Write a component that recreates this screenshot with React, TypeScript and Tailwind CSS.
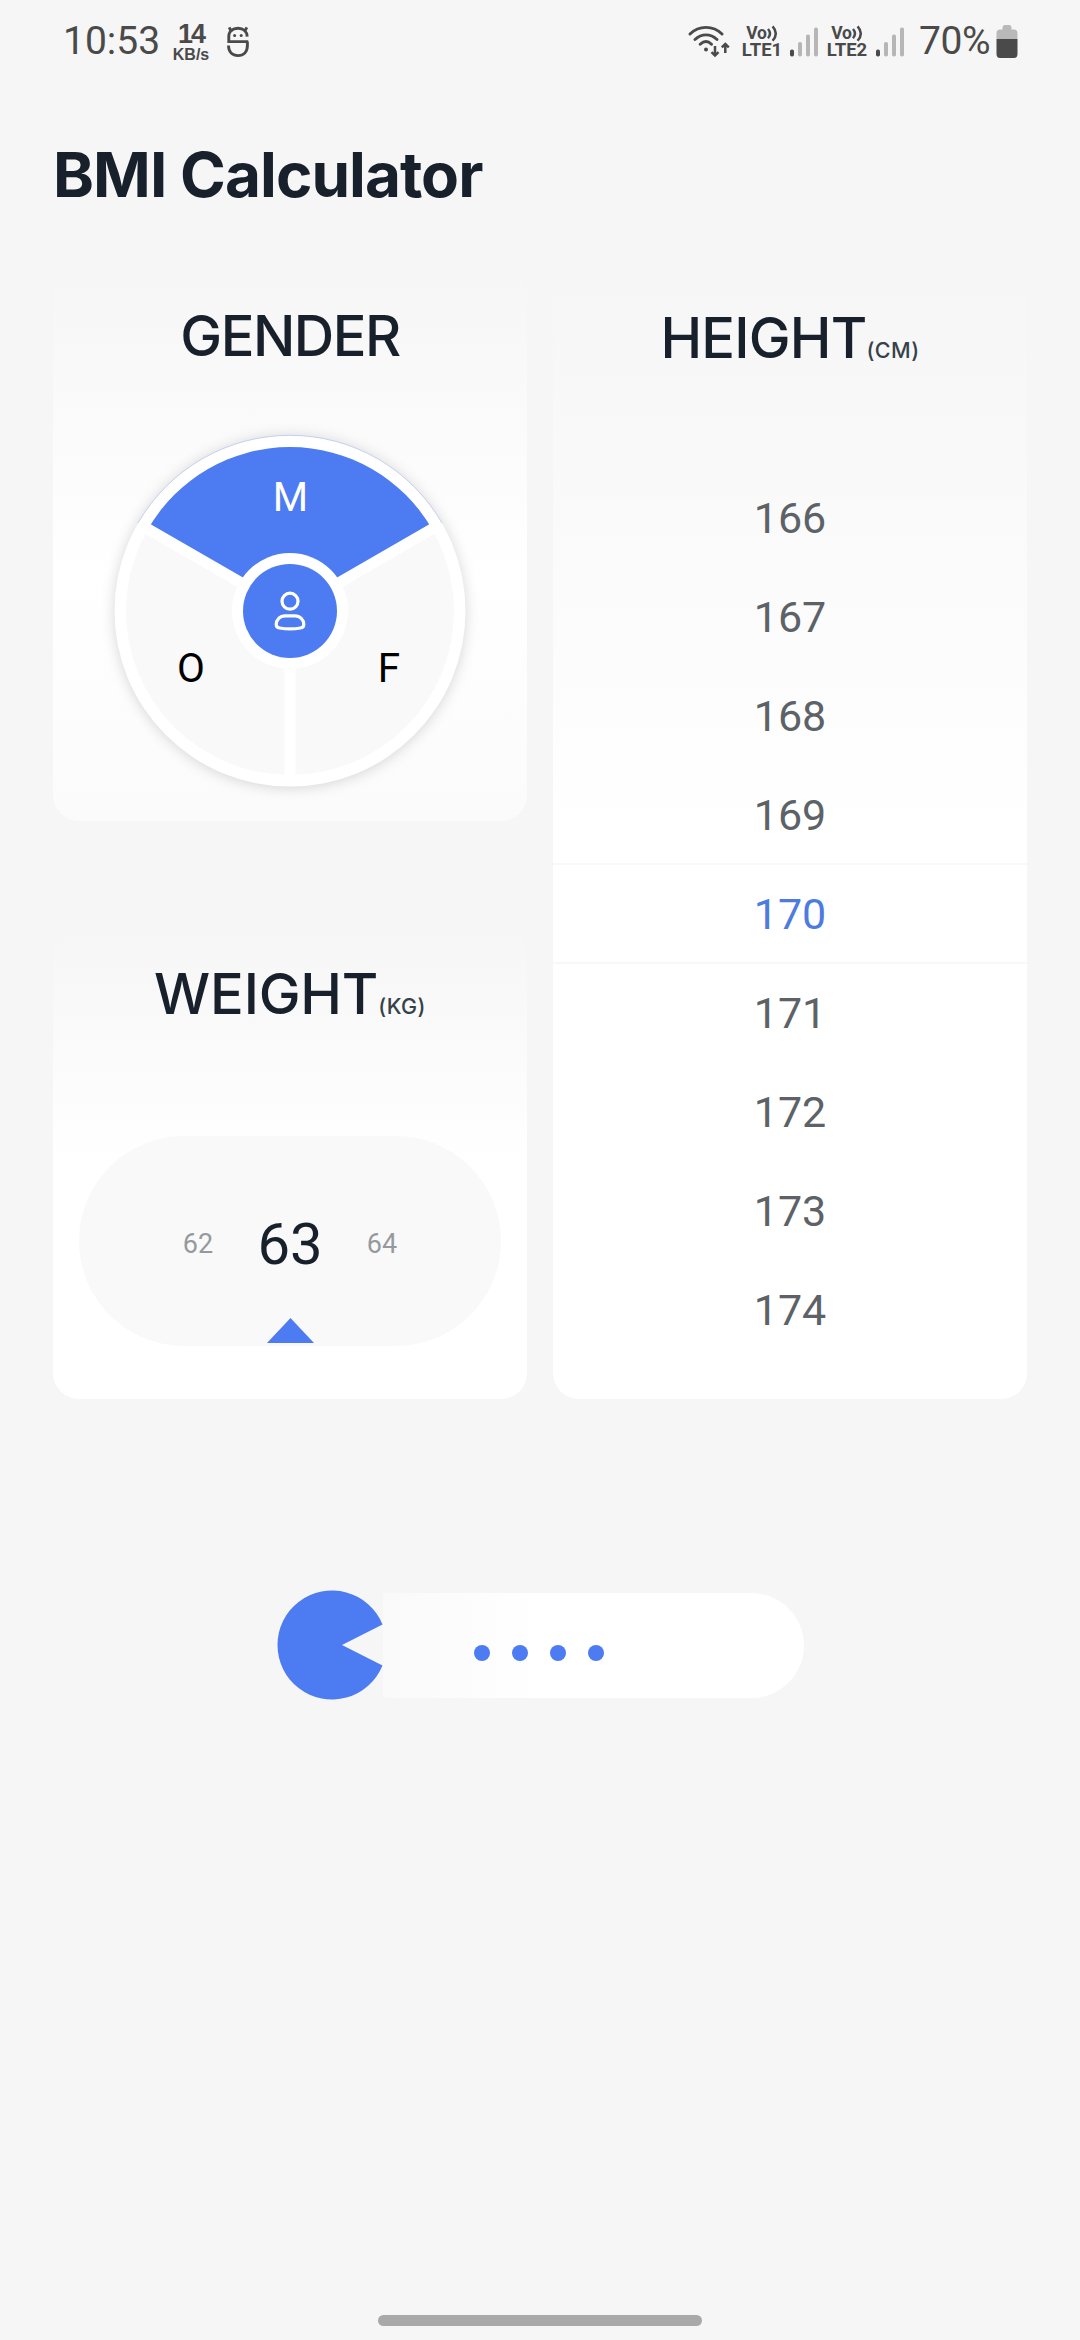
const BLUE = "#4d7bf1";

function Signal() {
  return (
    <svg width="28" height="30" viewBox="0 0 28 30">
      <rect x="0" y="22.5" width="4" height="7" rx="1.8" fill="#4a4a4a" />
      <rect x="8" y="15" width="4" height="14.5" rx="1.8" fill="#b6b6b6" />
      <rect x="16" y="7.5" width="4" height="22" rx="1.8" fill="#b6b6b6" />
      <rect x="24" y="0.5" width="4" height="29" rx="1.8" fill="#b6b6b6" />
    </svg>
  );
}

function Lte({ n }: { n: string }) {
  return (
    <div className="flex w-[40px] flex-col items-center whitespace-nowrap font-bold">
      <span className="flex h-[17px] items-center text-[17.5px] leading-[17px] tracking-[-0.3px]">
        Vo
        <svg className="shrink-0" width="11" height="17" viewBox="0 0 11 17" fill="none" stroke="#4a4a4a" strokeWidth="2.5">
          <path d="M1 4 Q5 8.5 1 13.2 M5.6 1.4 Q12 8.4 5.6 15.8" />
        </svg>
      </span>
      <span className="h-[17px] text-[18.5px] leading-[17px]">LTE{n}</span>
    </div>
  );
}

function StatusBar() {
  return (
    <header className="flex h-[80px] items-start pt-[23px] text-[#4a4a4a]">
      <div className="ml-[63px] w-[98px] text-[39px] leading-[36px]">10:53</div>
      <div className="ml-[10px] flex w-[40px] flex-col items-center font-['Liberation_Sans',sans-serif] font-bold">
        <span className="h-[22px] text-[27px] leading-[22px] tracking-[-2px]">14</span>
        <span className="mt-[2px] text-[16px] leading-[16px]">KB/s</span>
      </div>
      <svg className="ml-[15px] mt-[2px]" width="24" height="34" viewBox="0 0 24 34" fill="none" stroke="#4a4a4a" strokeWidth="2.9">
        <path d="M22.2 16.6H2.8V11.6C2.8 6.4 6.5 3.2 12 3.2S21 6.4 21.2 11.6M2.5 20.6C2.5 27 6.5 30.6 12 30.6S21.4 27 21.4 20.4V16.6M5.6 7.2 3.2 2.4M18.4 7.2 20.8 2.4" />
        <circle cx="8.6" cy="10.6" r="1.5" fill="#4a4a4a" stroke="none" />
        <circle cx="15.2" cy="10.6" r="1.5" fill="#4a4a4a" stroke="none" />
      </svg>
      <div className="ml-auto flex items-start">
        <svg className="mt-[2px]" width="43" height="34" viewBox="0 0 43 34" fill="none" stroke="#4a4a4a" strokeWidth="2.9" strokeLinecap="round" strokeLinejoin="round">
          <path d="M2 9C11 0.2 25 0.2 34 9M7 14.5C13.5 8.3 22.5 8.3 29 14.5M12.2 19.3C16 15.7 20 15.7 23.5 19.2" />
          <circle cx="18" cy="24.5" r="2" fill="#4a4a4a" stroke="none" />
          <path d="M27 21V30M23.5 27.2 27 30.6 30.5 27.2M37.3 28V19.5M33.8 22.4 37.3 19 40.8 22.4" strokeWidth="2.5" strokeLinecap="butt" strokeLinejoin="miter" />
        </svg>
        <div className="ml-[11px] mt-[2px]"><Lte n="1" /></div>
        <div className="ml-[8px] mt-[3.5px]"><Signal /></div>
        <div className="ml-[9px] mt-[2px]"><Lte n="2" /></div>
        <div className="ml-[9px] mt-[3.5px]"><Signal /></div>
        <div className="ml-[15px] w-[73px] text-[39px] leading-[36px] tracking-[-0.4px]">70%</div>
        <svg className="ml-[4px] mr-[62px] mt-[2px]" width="22" height="33" viewBox="0 0 22 33">
          <path d="M6.5 3Q6.5 0 9 0H13Q15.5 0 15.5 3V4.5H18Q21.5 4.5 21.5 8V14H.5V8Q.5 4.5 4 4.5H6.5Z" fill="#b9b9b9" />
          <path d="M.5 14H21.5V29Q21.5 33 18 33H4Q.5 33 .5 29Z" fill="#4a4a4a" />
        </svg>
      </div>
    </header>
  );
}

function GenderWheel() {
  return (
    <svg className="mx-auto block overflow-visible" width="352" height="352" viewBox="-176 -176 352 352">
      <circle r="175.5" fill="#fff" className="drop-shadow-[0_1px_7px_rgba(0,0,0,0.16)]" />
      <path d="M-152 -88A175.6 175.6 0 0 1 152 -88" fill="none" stroke="#b9c8f5" strokeWidth="0.8" />
      <circle r="164" fill="#f9f9f9" />
      <path d="M0 0L-142 -82A164 164 0 0 1 142 -82Z" fill={BLUE} />
      <path d="M0 0L-146 -84.3M0 0L146 -84.3M0 0V168" stroke="#fff" strokeWidth="11" />
      <circle r="58" fill="#fff" />
      <circle r="47" fill={BLUE} />
      <g fill="none" stroke="#fff" strokeWidth="3.2" strokeLinejoin="round">
        <circle cx="0" cy="-9.8" r="8" />
        <path d="M-5 4.8H5C10 4.8 13.8 9 13.8 13.4C13.8 15.6 12.6 16.6 10.5 17C4 18.1 -4 18.1 -10.5 17C-12.6 16.6 -13.8 15.6 -13.8 13.4C-13.8 9 -10 4.8 -5 4.8Z" />
      </g>
      <g fontSize="40.5" textAnchor="middle">
        <text x="0.5" y="-100" fill="#fff">M</text>
        <text x="-99" y="71" fill="#000">O</text>
        <text x="99" y="71" fill="#000">F</text>
      </g>
    </svg>
  );
}

function Heading({ title, unit, tracking }: { title: string; unit?: string; tracking: string }) {
  return (
    <h2 className="flex h-[64px] items-baseline justify-center whitespace-nowrap font-['Inter',sans-serif] text-[56px] font-medium leading-[64px] text-[#17202b]">
      <span className={tracking}>{title}</span>
      {unit && <span className="text-[21.5px] leading-[24px] tracking-[0.4px] text-[#36414a]">({unit})</span>}
    </h2>
  );
}

export default function App() {
  const heights = [166, 167, 168, 169, 170, 171, 172, 173, 174];
  return (
    <div className="flex h-[2340px] w-[1080px] flex-col overflow-hidden bg-[#f6f6f6] font-['Roboto',sans-serif]">
      <StatusBar />
      <h1 className="ml-[53px] mt-[64px] h-[126px] whitespace-nowrap font-['Inter',sans-serif] text-[62px] font-bold leading-[62px] tracking-[-0.95px] text-[#17202b]">
        BMI Calculator
      </h1>
      <main className="flex h-[1129px] gap-[26px] px-[53px]">
        <div className="flex w-[474px] flex-col justify-between">
          <section className="h-[551px] rounded-[26px] bg-[linear-gradient(#f6f6f6,#ffffff_55%,#fbfbfb)] pt-[34px]">
            <Heading title="GENDER" tracking="tracking-[-1.5px]" />
            <div className="mt-[67px]"><GenderWheel /></div>
          </section>
          <section className="h-[472px] rounded-[26px] bg-[linear-gradient(#f6f6f6,#ffffff_50%)] px-[26px] pt-[35px]">
            <Heading title="WEIGHT" unit="KG" tracking="tracking-[-0.2px]" />
            <div className="mt-[110px] flex h-[210px] flex-col items-center rounded-full bg-[#f9f9f9]">
              <div className="mt-[72px] flex h-[72px] items-center text-[27px] text-[#96999e]">
                <span className="w-[60px] text-center">62</span>
                <span className="w-[124px] text-center text-[58px] text-[#17202b]">63</span>
                <span className="w-[60px] text-center">64</span>
              </div>
              <svg className="mt-[38px]" width="48" height="25" viewBox="0 0 48 25">
                <path d="M24.5 0L48 25H1Z" fill={BLUE} />
              </svg>
            </div>
          </section>
        </div>
        <section className="w-[474px] rounded-[26px] bg-[linear-gradient(#f6f6f6,#ffffff_50%)] pt-[36px]">
          <Heading title="HEIGHT" unit="CM" tracking="tracking-[-0.8px]" />
          <ul className="mt-[98px] text-center text-[43px] leading-[101px] text-[#5c6267]">
            {heights.map((h) => (
              <li key={h} className={h === 170 ? "h-[99px] text-[#4d7bde] shadow-[0_-1px_#f8f8f8,inset_0_1px_#f8f8f8,0_1px_#f8f8f8,inset_0_-1px_#f8f8f8]" : "h-[99px]"}>
                {h}
              </li>
            ))}
          </ul>
        </section>
      </main>
      <div className="ml-[278px] mt-[194px] flex h-[105px] w-[526px] items-center rounded-r-full bg-[linear-gradient(90deg,#f6f6f6,#ffffff_50%)]">
        <svg className="shrink-0 overflow-visible bg-[#f6f6f6]" width="104.5" height="109" viewBox="0 0 104.5 109">
          <path d="M64 54L104.5 33.5A54.5 54.5 0 1 0 104.5 74.5Z" fill={BLUE} />
        </svg>
        <div className="ml-[91.5px] mt-[15px] flex gap-[22px]">
          {[0, 1, 2, 3].map((i) => (
            <span key={i} className="size-[16px] rounded-full bg-[#4d7bf1]" />
          ))}
        </div>
      </div>
      <div className="mx-auto mb-[14px] mt-auto h-[11px] w-[324px] rounded-full bg-[#a9a9a9]" />
    </div>
  );
}
